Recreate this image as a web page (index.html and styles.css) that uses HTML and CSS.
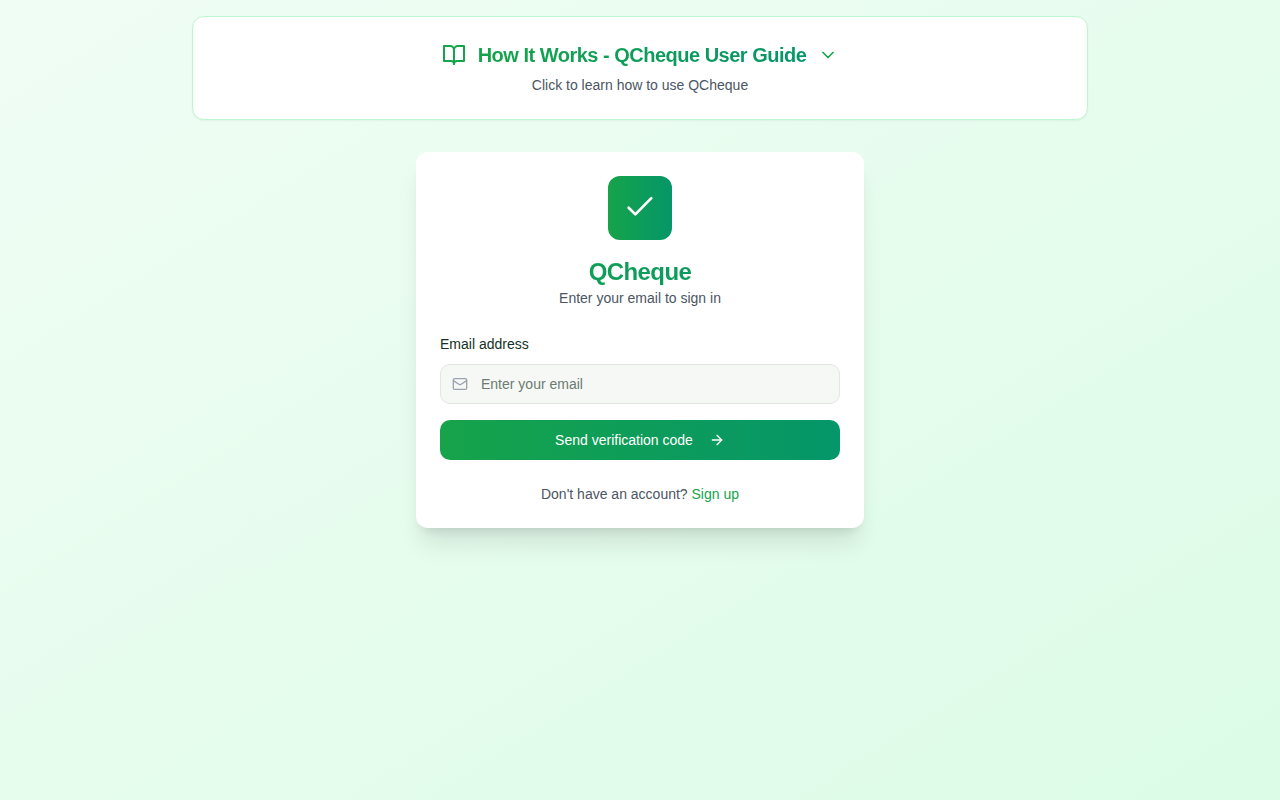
FILE: index.html
```html
<!DOCTYPE html>
<html lang="en">
<head>
    <meta charset="UTF-8">
    <meta name="viewport" content="width=device-width, initial-scale=1.0">
    <title>QCheque - Sign in</title>
    <link rel="stylesheet" href="styles.css">
</head>
<body>

<main class="page">
    <button type="button" class="guide">
        <span class="guide-title">
            <svg class="icon-book" viewBox="0 0 24 24"><path d="M2 3h6a4 4 0 0 1 4 4v14a3 3 0 0 0-3-3H2z"/><path d="M22 3h-6a4 4 0 0 0-4 4v14a3 3 0 0 1 3-3h7z"/></svg>
            <span class="gradient-text">How It Works - QCheque User Guide</span>
            <svg class="icon-chevron" viewBox="0 0 24 24"><path d="m6 9 6 6 6-6"/></svg>
        </span>
        <span class="guide-text">Click to learn how to use QCheque</span>
    </button>

    <section class="card">
        <div class="logo">
            <svg viewBox="0 0 24 24"><path d="M3.5 11.8l5 5L20.5 4.6"/></svg>
        </div>
        <h1 class="gradient-text">QCheque</h1>
        <p class="subtitle">Enter your email to sign in</p>

        <form class="form">
            <label for="email">Email address</label>
            <div class="field">
                <svg class="icon-mail" viewBox="0 0 24 24"><rect width="20" height="16" x="2" y="4" rx="2"/><path d="m22 7-8.97 5.7a1.94 1.94 0 0 1-2.06 0L2 7"/></svg>
                <input type="email" id="email" placeholder="Enter your email">
            </div>
            <button type="submit" class="submit">
                Send verification code
                <svg class="icon-arrow" viewBox="0 0 24 24"><path d="M5 12h14"/><path d="m12 5 7 7-7 7"/></svg>
            </button>
        </form>

        <p class="signup">Don't have an account? <a href="#">Sign up</a></p>
    </section>
</main>

</body>
</html>
```
FILE: styles.css
```css
* {
    box-sizing: border-box;
}

body {
    margin: 0;
    min-height: 100vh;
    background: linear-gradient(to bottom right, #f0fdf4, #dcfce7);
    color: #14321f;
    font-family: "Liberation Sans", Arial, sans-serif;
    font-size: 14px;
    line-height: 20px;
}

h1, p {
    margin: 0;
}

button, input {
    font: inherit;
}

svg {
    flex-shrink: 0;
    fill: none;
    stroke: currentColor;
    stroke-width: 2;
    stroke-linecap: round;
    stroke-linejoin: round;
}

.page {
    display: flex;
    flex-direction: column;
    align-items: center;
    gap: 32px;
    padding: 16px;
}

.gradient-text {
    background: linear-gradient(to right, #16a34a, #059669);
    -webkit-background-clip: text;
    background-clip: text;
    color: transparent;
    letter-spacing: -0.025em;
}

/* User guide panel */
.guide {
    display: flex;
    flex-direction: column;
    align-items: center;
    gap: 6px;
    width: 100%;
    max-width: 896px;
    padding: 24px;
    background: #fff;
    border: 1px solid #bbf7d0;
    border-radius: 12px;
    box-shadow: 0 1px 2px rgba(0, 0, 0, 0.05);
    cursor: pointer;
}

.guide-title {
    display: flex;
    align-items: center;
    gap: 12px;
    color: #16a34a;
    font-size: 20px;
    font-weight: bold;
    line-height: 28px;
}

.guide-text,
.subtitle,
.signup {
    color: #4b5563;
}

.icon-book {
    width: 24px;
    height: 24px;
}

.icon-chevron {
    width: 20px;
    height: 20px;
}

/* Sign in card */
.card {
    width: 100%;
    max-width: 448px;
    padding: 24px;
    background: #fff;
    border-radius: 12px;
    box-shadow: 0 20px 25px -5px rgba(0, 0, 0, 0.1), 0 8px 10px -6px rgba(0, 0, 0, 0.1);
    text-align: center;
}

.logo {
    display: flex;
    align-items: center;
    justify-content: center;
    width: 64px;
    height: 64px;
    margin: 0 auto 16px;
    background: linear-gradient(to right, #16a34a, #059669);
    border-radius: 12px;
    color: #fff;
}

.logo svg {
    width: 32px;
    height: 32px;
}

.card h1 {
    font-size: 24px;
    line-height: 32px;
}

.form {
    display: flex;
    flex-direction: column;
    margin: 26px 0 24px;
    text-align: left;
}

.form label {
    margin-bottom: 10px;
}

.field {
    position: relative;
    margin-bottom: 16px;
}

.field input {
    display: block;
    width: 100%;
    height: 40px;
    padding: 0 12px 0 40px;
    background: #f6f8f6;
    border: 1px solid #dfe7e2;
    border-radius: 10px;
    color: inherit;
}

.field input::placeholder {
    color: #6b7c70;
}

.icon-mail {
    position: absolute;
    top: 12px;
    left: 12px;
    width: 16px;
    height: 16px;
    color: #9ca3af;
}

.submit {
    display: flex;
    align-items: center;
    justify-content: center;
    gap: 16px;
    height: 40px;
    background: linear-gradient(to right, #16a34a, #059669);
    border: 0;
    border-radius: 10px;
    color: #fff;
    cursor: pointer;
}

.icon-arrow {
    width: 16px;
    height: 16px;
}

.signup a {
    color: #16a34a;
    text-decoration: none;
}
```
